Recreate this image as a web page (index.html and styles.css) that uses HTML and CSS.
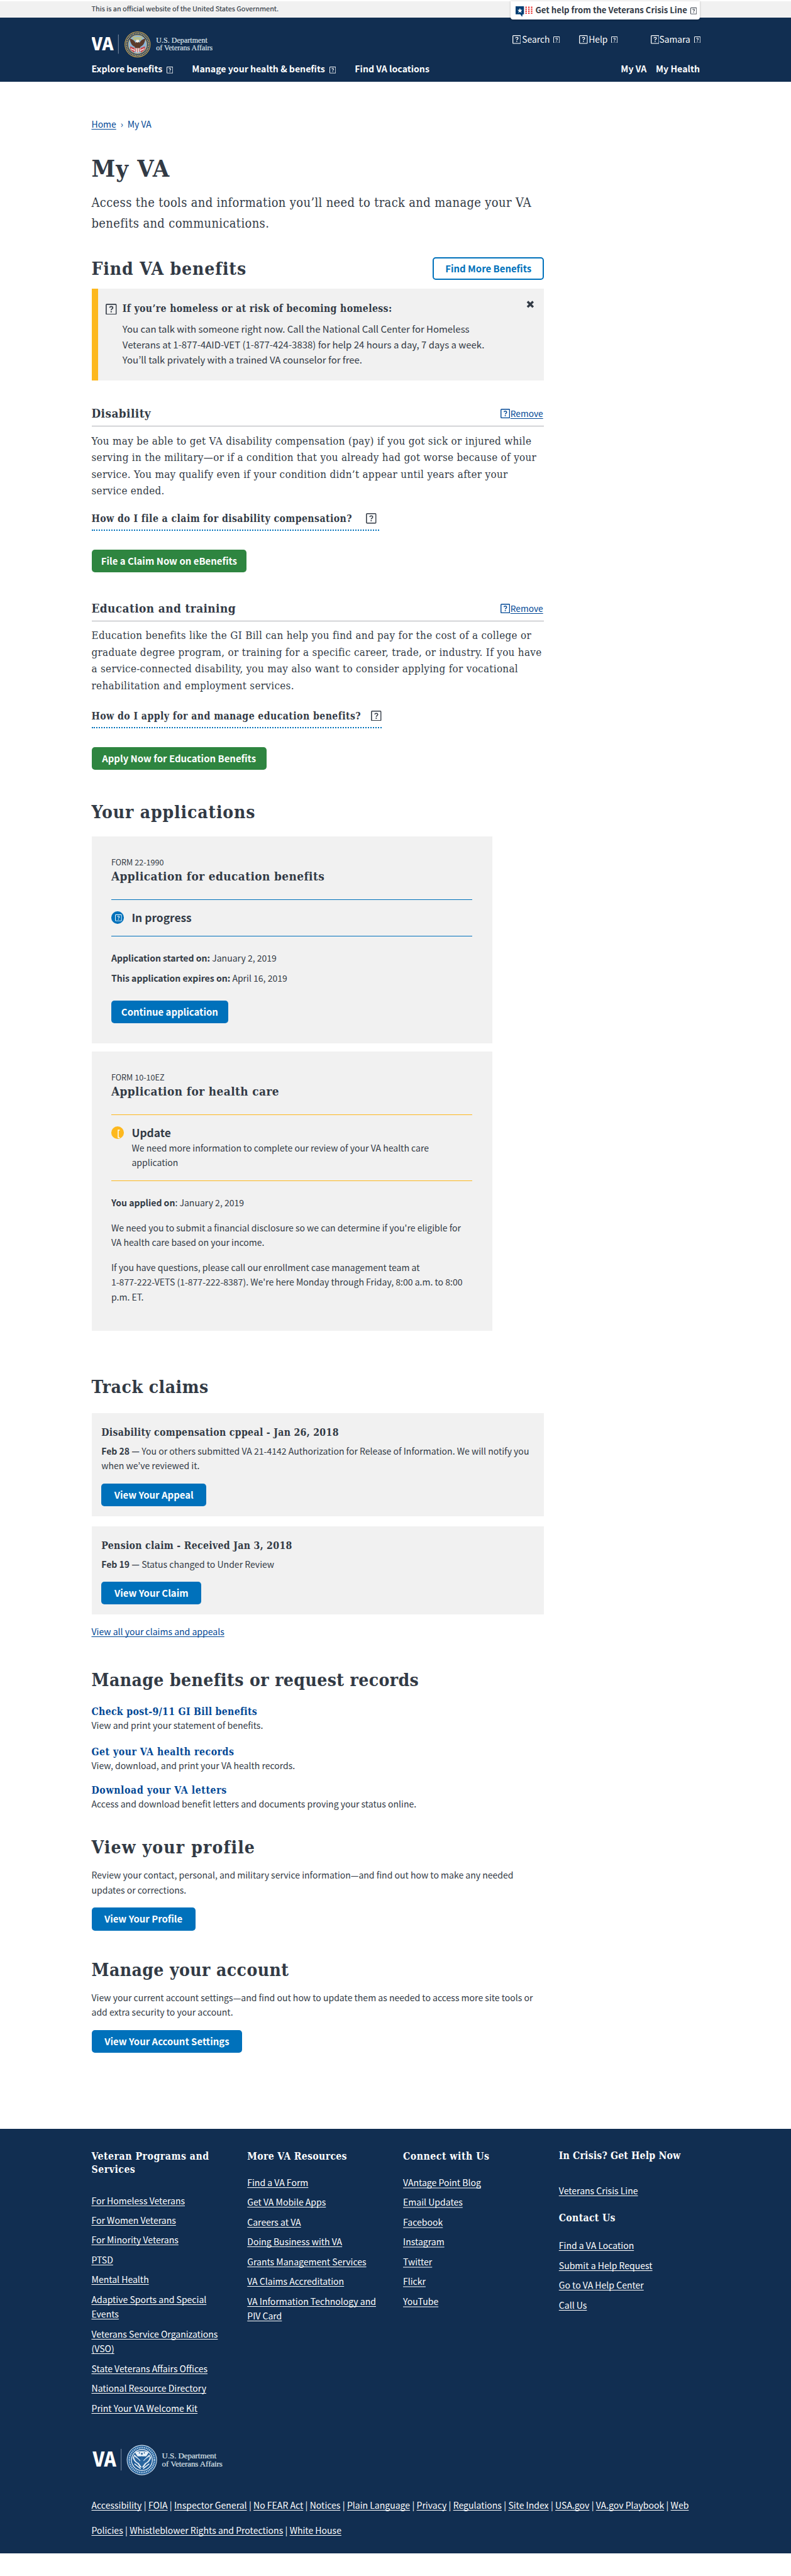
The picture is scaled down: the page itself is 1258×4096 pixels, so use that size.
FILE: index.html
```
<!DOCTYPE html>
<html lang="en">
<head>
<meta charset="utf-8">
<title>My VA</title>
<link rel="stylesheet" href="styles.css">
</head>
<body>
<svg class="defs" aria-hidden="true">
  <symbol id="box" viewBox="0 0 16 16" preserveAspectRatio="none">
    <rect x="0.8" y="0.8" width="14.4" height="14.4" rx="1" fill="none" stroke="currentColor" stroke-width="1.5"/>
    <path d="M5.700 5.600C6.200 4.300 7 4 8 4c1.400 0 2.300.8 2.300 1.900C10.300 7.400 8 7.500 8 9.300" fill="none" stroke="currentColor" stroke-width="1.500"/>
    <rect x="7.100" y="10.600" width="1.800" height="1.700" fill="currentColor"/>
  </symbol>
</svg>

<div class="gov-bar">
  <div class="wrap gov-row">
    <p class="gov-text">This is an official website of the United States Government.</p>
    <a class="crisis">
      <svg class="crisis-logo" viewBox="0 0 28 18">
        <path d="M0 0h13.500v13h-2L10.500 17 7.500 13H0z" fill="#003e73"/>
        <path d="M7 2.800l1.100 2.800 3 .2-2.300 1.900.8 2.900L7 9l-2.600 1.600.8-2.900L2.900 5.800l3-.2z" fill="#fff"/>
        <g stroke="#e8302f" stroke-width="2.200" stroke-dasharray="2.200 1"><path d="M17 0.500v12"/><path d="M21.500 0.500v12"/><path d="M26 0.500v12"/></g>
      </svg>
      <span>Get help from the Veterans Crisis Line</span>
      <svg class="i10"><use href="#box"/></svg>
    </a>
  </div>
</div>

<header class="header">
  <div class="wrap">
    <div class="head-top">
      <svg class="logo" width="196" height="44" viewBox="0 0 196 44">
        <text class="logo-va" x="-0.500" y="31.500" font-size="28.500" textLength="35.500" lengthAdjust="spacingAndGlyphs">VA</text>
        <path d="M43 6v31" stroke="#8292a8" stroke-width="1"/>
        <circle cx="74" cy="22" r="21" fill="#c9a24a"/>
        <circle cx="74" cy="22" r="19.800" fill="#1f3f6e"/>
        <circle cx="74" cy="22" r="17.700" fill="none" stroke="#cfae5c" stroke-width="2.200" stroke-dasharray="1.600 1.100"/>
        <circle cx="74" cy="22" r="15.300" fill="#d9b860"/>
        <circle cx="74" cy="22" r="14.400" fill="#8db4d6"/>
        <path d="M67 10h14v5H67z" fill="#c8c06a" opacity=".7"/>
        <path d="M62 25l10 4-4 6-6-5zM86 25l-10 4 4 6 6-5z" fill="#c94a50"/>
        <path d="M63 29l7 3M85 29l-7 3" stroke="#fff" stroke-width="1.300"/>
        <path d="M61.500 12.500c4 1 8 3.500 9.500 7.500l1-4h4l1 4c1.500-4 5.500-6.500 9.500-7.500-.5 6-2.500 11-7.500 13l-3 6-2 1-2-1-3-6c-5-2-7-7-7.500-13z" fill="#5c3a2a"/>
        <path d="M72 14.500h4l1 3-3 1.500-3-1z" fill="#f4efe4"/>
        <path d="M69 28h10l-2 6-3 1.500L71 34z" fill="#e9e4e0"/>
        <path d="M71 28v6M74 28v7M77 28v6" stroke="#b8454b" stroke-width="1"/>
        <text class="logo-dept" x="104" y="19" font-size="12.200" textLength="83">U.S. Department</text>
        <text class="logo-dept" x="104" y="31.300" font-size="12.200" textLength="91.500">of Veterans Affairs</text>
      </svg>
      <div class="util">
        <a class="u-search"><svg class="i14"><use href="#box"/></svg><span>Search</span><svg class="i10"><use href="#box"/></svg></a>
        <a class="u-help"><svg class="i14"><use href="#box"/></svg><span>Help</span><svg class="i10"><use href="#box"/></svg></a>
        <a class="u-user"><svg class="i14"><use href="#box"/></svg><span>Samara</span><svg class="i10"><use href="#box"/></svg></a>
      </div>
    </div>
    <nav class="nav">
      <a>Explore benefits <svg class="i10"><use href="#box"/></svg></a>
      <a class="n2">Manage your health &amp; benefits <svg class="i10"><use href="#box"/></svg></a>
      <a class="n3">Find VA locations</a>
      <a class="n4">My VA</a>
      <a class="n5">My Health</a>
    </nav>
  </div>
</header>

<main class="wrap">
  <div class="crumbs"><a class="link">Home</a><span class="sep">›</span><span>My VA</span></div>
  <h1 class="h1">My VA</h1>
  <p class="intro">Access the tools and information you’ll need to track and manage your VA<br>benefits and communications.</p>

  <div class="content">
    <section>
      <div class="find-head">
        <h2 class="h2 track-4">Find VA benefits</h2>
        <a class="btn outline">Find More Benefits</a>
      </div>
      <div class="alert">
        <svg class="i18"><use href="#box"/></svg>
        <div class="alert-body">
          <h3 class="h4">If you’re homeless or at risk of becoming homeless:</h3>
          <p>You can talk with someone right now. Call the National Call Center for Homeless<br>Veterans at 1-877-4AID-VET (1-877-424-3838) for help 24 hours a day, 7 days a week.<br>You’ll talk privately with a trained VA counselor for free.</p>
        </div>
        <svg class="close" viewBox="0 0 13 12"><path d="M2 1.500l9 9M11 1.500l-9 9" stroke="#323a45" stroke-width="3.600"/></svg>
      </div>
    </section>

    <section class="benefit">
      <div class="benefit-head">
        <h3 class="h3">Disability</h3>
        <a class="remove"><svg class="i15"><use href="#box"/></svg><span class="link">Remove</span></a>
      </div>
      <p class="serif">You may be able to get VA disability compensation (pay) if you got sick or injured while<br>serving in the military—or if a condition that you already had got worse because of your<br>service. You may qualify even if your condition didn’t appear until years after your<br>service ended.</p>
      <div class="question q1"><span class="h4 track-1">How do I file a claim for disability compensation?</span><svg class="i17"><use href="#box"/></svg></div>
      <a class="btn green b-claim">File a Claim Now on eBenefits</a>
    </section>

    <section class="benefit second">
      <div class="benefit-head">
        <h3 class="h3">Education and training</h3>
        <a class="remove"><svg class="i15"><use href="#box"/></svg><span class="link">Remove</span></a>
      </div>
      <p class="serif">Education benefits like the GI Bill can help you find and pay for the cost of a college or<br>graduate degree program, or training for a specific career, trade, or industry. If you have<br>a service-connected disability, you may also want to consider applying for vocational<br>rehabilitation and employment services.</p>
      <div class="question q2"><span class="h4 track-1">How do I apply for and manage education benefits?</span><svg class="i17"><use href="#box"/></svg></div>
      <a class="btn green b-edu">Apply Now for Education Benefits</a>
    </section>

    <section class="apps">
      <h2 class="h2 track-4">Your applications</h2>
      <article class="app edu">
        <p class="form-no">FORM 22-1990</p>
        <h3 class="h3">Application for education benefits</h3>
        <div class="status blue">
          <span class="dot"><svg class="dot-i"><use href="#box"/></svg></span>
          <div><p class="status-name">In progress</p></div>
        </div>
        <p class="meta"><b>Application started on:</b> January 2, 2019</p>
        <p class="meta2"><b>This application expires on:</b> April 16, 2019</p>
        <a class="btn b-cont">Continue application</a>
      </article>
      <article class="app health">
        <p class="form-no">FORM 10-10EZ</p>
        <h3 class="h3">Application for health care</h3>
        <div class="status gold">
          <span class="dot"><svg class="dot-b" viewBox="0 0 4 14"><path d="M3.500 1H1v12h2.500" fill="none" stroke="#fff" stroke-width="1.500"/></svg></span>
          <div><p class="status-name">Update</p><p class="status-text">We need more information to complete our review of your VA health care<br>application</p></div>
        </div>
        <p class="meta"><b>You applied on</b>: January 2, 2019</p>
        <p class="para">We need you to submit a financial disclosure so we can determine if you're eligible for<br>VA health care based on your income.</p>
        <p class="para">If you have questions, please call our enrollment case management team at<br>1-877-222-VETS (1-877-222-8387). We're here Monday through Friday, 8:00 a.m. to 8:00<br>p.m. ET.</p>
      </article>
    </section>

    <section class="claims">
      <h2 class="h2 track-2">Track claims</h2>
      <article class="claim">
        <h3 class="h4 track-0">Disability compensation cppeal - Jan 26, 2018</h3>
        <p><b>Feb 28 —</b> You or others submitted VA 21-4142 Authorization for Release of Information. We will notify you<br>when we’ve reviewed it.</p>
        <a class="btn b-appeal">View Your Appeal</a>
      </article>
      <article class="claim">
        <h3 class="h4 track-0">Pension claim - Received Jan 3, 2018</h3>
        <p><b>Feb 19 —</b> Status changed to Under Review</p>
        <a class="btn b-vclaim">View Your Claim</a>
      </article>
      <p class="all-claims"><a class="link">View all your claims and appeals</a></p>
    </section>

    <section class="records">
      <h2 class="h2">Manage benefits or request records</h2>
      <div class="rec r1"><a class="h4 track-0">Check post-9/11 GI Bill benefits</a><p>View and print your statement of benefits.</p></div>
      <div class="rec r2"><a class="h4 track-2">Get your VA health records</a><p>View, download, and print your VA health records.</p></div>
      <div class="rec r3"><a class="h4 track-3">Download your VA letters</a><p>Access and download benefit letters and documents proving your status online.</p></div>
    </section>

    <section class="profile">
      <h2 class="h2 track-5">View your profile</h2>
      <p>Review your contact, personal, and military service information—and find out how to make any needed<br>updates or corrections.</p>
      <a class="btn b-profile">View Your Profile</a>
    </section>

    <section class="profile account">
      <h2 class="h2">Manage your account</h2>
      <p>View your current account settings—and find out how to update them as needed to access more site tools or<br>add extra security to your account.</p>
      <a class="btn b-account">View Your Account Settings</a>
    </section>
  </div>
</main>

<footer class="footer">
  <div class="wrap">
    <div class="cols">
      <div class="col c1">
        <h4 class="fh track-2">Veteran Programs and<br>Services</h4>
        <ul>
          <li><a>For Homeless Veterans</a></li><li><a>For Women Veterans</a></li><li><a>For Minority Veterans</a></li><li><a>PTSD</a></li><li><a>Mental Health</a></li>
          <li><a>Adaptive Sports and Special<br>Events</a></li><li><a>Veterans Service Organizations<br>(VSO)</a></li><li><a>State Veterans Affairs Offices</a></li><li><a>National Resource Directory</a></li><li><a>Print Your VA Welcome Kit</a></li>
        </ul>
      </div>
      <div class="col">
        <h4 class="fh">More VA Resources</h4>
        <ul>
          <li><a>Find a VA Form</a></li><li><a>Get VA Mobile Apps</a></li><li><a>Careers at VA</a></li><li><a>Doing Business with VA</a></li><li><a>Grants Management Services</a></li><li><a>VA Claims Accreditation</a></li><li><a>VA Information Technology and<br>PIV Card</a></li>
        </ul>
      </div>
      <div class="col social">
        <h4 class="fh track-2">Connect with Us</h4>
        <ul>
          <li><a>VAntage Point Blog</a></li><li><a>Email Updates</a></li><li><a>Facebook</a></li><li><a>Instagram</a></li><li><a>Twitter</a></li><li><a>Flickr</a></li><li><a>YouTube</a></li>
        </ul>
      </div>
      <div class="col c4">
        <h4 class="fh track-x">In Crisis? Get Help Now</h4>
        <ul class="crisis-list"><li><a>Veterans Crisis Line</a></li></ul>
        <h4 class="fh">Contact Us</h4>
        <ul class="contact-list"><li><a>Find a VA Location</a></li><li><a>Submit a Help Request</a></li><li><a>Go to VA Help Center</a></li><li><a>Call Us</a></li></ul>
      </div>
    </div>
    <svg class="foot-logo" width="214" height="52" viewBox="0 0 214 52">
      <text class="logo-va" x="1.500" y="37" font-size="32" textLength="38" lengthAdjust="spacingAndGlyphs">VA</text>
      <path d="M47.500 8v35" stroke="#8292a8" stroke-width="1"/>
      <circle cx="81" cy="26" r="24.500" fill="#c9dcec"/>
      <circle cx="81" cy="26" r="23.300" fill="#1f5c97"/>
      <circle cx="81" cy="26" r="20.300" fill="none" stroke="#b8d2e8" stroke-width="2.600" stroke-dasharray="1.600 1.300"/>
      <circle cx="81" cy="26" r="17.500" fill="#fff"/>
      <circle cx="81" cy="26" r="16.300" fill="#1f5c97"/>
      <path d="M70 14c3-3 19-3 22 0l-4 6H74z" fill="#e6f0f8"/>
      <path d="M66 22l3-5 12 12 12-12 3 5c-1 4-4 8-8 10l-4 6h-6l-4-6c-4-2-7-6-8-10z" fill="#dbe8f3"/>
      <path d="M68 20c3 1 8 5 10 8l3-9 3 9c2-3 7-7 10-8-1 6-4 9-8 11l-5 7-5-7c-4-2-7-5-8-11z" fill="#2a659e"/>
      <path d="M69 32l10 8M93 32l-10 8" stroke="#fff" stroke-width="1.500"/>
      <circle cx="81" cy="16" r="1.500" fill="#1f5c97"/><circle cx="77" cy="14.500" r="1" fill="#1f5c97"/><circle cx="85" cy="14.500" r="1" fill="#1f5c97"/>
      <text class="logo-dept" x="113.500" y="23" font-size="13.200" textLength="88">U.S. Department</text>
      <text class="logo-dept" x="113.500" y="37" font-size="13.200" textLength="98">of Veterans Affairs</text>
    </svg>
    <p class="legal"><a>Accessibility</a><i>|</i><a>FOIA</a><i>|</i><a>Inspector General</a><i>|</i><a>No FEAR Act</a><i>|</i><a>Notices</a><i>|</i><a>Plain Language</a><i>|</i><a>Privacy</a><i>|</i><a>Regulations</a><i>|</i><a>Site Index</a><i>|</i><a>USA.gov</a><i>|</i><a>VA.gov Playbook</a><i>|</i><a>Web<br>Policies</a><i>|</i><a>Whistleblower Rights and Protections</a><i>|</i><a>White House</a></p>
  </div>
</footer>
</body>
</html>
```

FILE: styles.css
```
html { zoom: 0.9832; }
* { box-sizing: border-box; }
body {
  margin: 0;
  padding-top: 2px;
  background: #fff;
  color: #323a45;
  font: 14.29px/24px "Noto Sans CJK KR", "Noto Sans CJK JP", sans-serif;
  white-space: nowrap;
  overflow-x: hidden;
}
h1, h2, h3, h4, p, ul { margin: 0; padding: 0; font-weight: inherit; }
ul { list-style: none; }
svg { flex: none; display: block; }
.defs { position: absolute; width: 0; height: 0; }
.wrap { width: 984px; margin-left: 148px; }
.i10 { width: 10.5px; height: 11px; }
.i14 { width: 14px; height: 14px; }
.i15 { width: 15.5px; height: 15.5px; }
.i17 { width: 17px; height: 17px; }
.i18 { width: 18px; height: 18px; }

/* government banner */
.gov-bar { height: 26px; background: #f1f1f1; }
.gov-row { display: flex; justify-content: space-between; }
.gov-text { font-size: 11.12px; line-height: 24px; -webkit-text-stroke: 0.15px; }
.crisis {
  position: relative;
  display: flex;
  width: 306px;
  height: 30px;
  padding-left: 8px;
  background: #fff;
  border-radius: 0 0 4px 4px;
  box-shadow: 0 1px 3px rgba(0, 0, 0, .25);
  font: 700 13.4px/28px "Noto Sans CJK KR", sans-serif;
}
.crisis-logo { width: 28px; height: 18px; margin: 8px 4px 0 0; }
.crisis .i10 { margin: 10.5px 0 0 5px; }

/* header */
.header { height: 104px; background: #112e51; color: #fff; }
.head-top { display: flex; justify-content: space-between; height: 72px; }
.logo { margin-top: 22px; }
.logo-va { font-family: "Noto Sans CJK KR", sans-serif; font-weight: 900; fill: #fff; }
.logo-dept { font-family: "Liberation Serif", serif; fill: #dfe5ec; stroke: #dfe5ec; stroke-width: 0.2px; }
.util { display: flex; margin: 24px -1px 0 0; font-size: 14.05px; }
.util a { display: flex; }
.util .i14 { margin-top: 5px; }
.util .i10 { margin: 6.5px 0 0 6px; }
.u-search span { margin-left: 2px; }
.u-help { margin-left: 31.5px; }
.u-help span { margin-left: 1px; }
.u-user { margin-left: 53px; }
.nav { display: flex; font-weight: 700; font-size: 14.4px; }
.nav a { display: flex; }
.nav .i10 { margin: 8px 0 0 7px; }
.n2 { margin-left: 30.5px; }
.n3 { margin-left: 31px; }
.n4 { margin-left: auto; }
.n5 { margin-left: 15px; }

/* type */
.h1, .h2, .h3, .h4, .fh { font-family: "DejaVu Serif Condensed", "DejaVu Serif", serif; font-stretch: condensed; font-weight: 700; }
.h1 { font-size: 38.5px; line-height: 48px; margin-top: 35px; letter-spacing: 1.14px; }
.h2 { font-size: 28.6px; line-height: 39px; letter-spacing: .4px; }
.h3 { font-size: 19.2px; line-height: 26px; letter-spacing: .41px; }
.h4 { font-size: 16px; line-height: 24px; letter-spacing: .36px; }
.fh { font-size: 16px; line-height: 22px; letter-spacing: .3px; }
.track-x { letter-spacing: .16px; }
.track-0 { letter-spacing: .31px; }
.track-1 { letter-spacing: .415px; }
.track-2 { letter-spacing: .51px; }
.track-3 { letter-spacing: .62px; }
.track-4 { letter-spacing: .86px; }
.track-5 { letter-spacing: 1.14px; }
.serif, .intro { font-family: "DejaVu Serif Condensed", "DejaVu Serif", serif; font-stretch: condensed; }
.serif { font-size: 17.2px; line-height: 27px; letter-spacing: .31px; margin-top: 9.5px; }
.intro { font-size: 20.3px; line-height: 34px; letter-spacing: .36px; margin-top: 15px; }
.link { color: #004795; text-decoration: underline; text-decoration-thickness: 1px; text-underline-offset: 2px; text-decoration-skip-ink: none; }
.crumbs { display: flex; padding-top: 57px; height: 81px; color: #004795; font-size: 14.2px; }
.crumbs .sep { margin: 0 7px; }

/* buttons */
.btn {
  display: block;
  height: 37px;
  border-radius: 5px;
  background: #0071bb;
  color: #fff;
  font-size: 15.2px;
  font-weight: 700;
  line-height: 37px;
  text-align: center;
}
.btn.green { background: #2e8540; }
.btn.outline { width: 180px; border: 2.05px solid #0071bb; background: #fff; color: #0071bb; line-height: 33px; }
.b-claim { width: 251px; margin-top: 30px; }
.b-edu { width: 283px; margin-top: 30.2px; }
.b-cont { width: 189px; margin-top: 24px; }
.b-appeal { width: 170px; margin-top: 16px; }
.b-vclaim { width: 162px; margin-top: 16px; }
.b-profile { width: 168px; margin-top: 16.4px; }
.b-account { width: 244px; margin-top: 16.4px; }

/* benefits */
.content { width: 732px; }
.find-head { display: flex; justify-content: space-between; height: 39px; margin-top: 37px; }
.alert { display: flex; height: 148px; margin-top: 12px; padding: 20px 16px 0 13px; border-left: 10.2px solid #fdb81e; background: #f1f1f1; }
.alert .i18 { margin-top: 4px; }
.alert-body { flex: 1; margin-left: 9px; }
.alert-body p { margin-top: 9px; font-size: 15.21px; line-height: 25px; }
.close { width: 13px; height: 12px; margin-top: -1px; }
.benefit { padding-top: 41px; }
.benefit.second { padding-top: 45px; }
.benefit-head { display: flex; justify-content: space-between; height: 34px; border-bottom: 1.02px solid #aeb0b5; }
.remove { display: flex; margin: 1px 1.5px 0 0; color: #004795; font-size: 14.03px; }
.remove .i15 { margin: 4.5px 0.5px 0 0; }
.question { display: flex; justify-content: space-between; height: 32.5px; padding-right: 4px; border-bottom: 2.05px dotted #0071bb; }
.question .h4 { line-height: 26px; }
.question .i17 { margin-top: 3.5px; }
.q1 { width: 465px; margin-top: 19px; }
.q2 { width: 469px; margin-top: 23px; padding-right: 0; }

/* applications */
.apps { padding-top: 50px; }
.app { width: 648px; margin-top: 19px; padding: 31.5px 32px 0; background: #f1f1f1; }
.app.edu { height: 334px; }
.app.health { height: 451px; margin-top: 14px; }
.form-no { font-size: 12.82px; line-height: 20px; }
.status { display: flex; margin-top: 23.5px; padding-top: 16.3px; border-top: 1.02px solid; border-bottom: 1.02px solid; }
.status > div { color: #323a45; }
.status.blue { height: 60px; border-color: #0071bb; }
.status.gold { height: 108px; border-color: #fdb81e; }
.status-name { font-size: 17.69px; font-weight: 700; }
.status-text { margin-top: 1.3px; }
.dot { display: flex; width: 20px; height: 20px; margin: 2.7px 13px 0 0; border-radius: 50%; background: #0071bb; color: #fff; }
.gold .dot { background: #fdb81e; }
.dot-i { width: 11px; height: 11px; margin: 5px 0 0 6px; }
.dot-b { width: 4px; height: 14px; margin: 5px 0 0 10px; }
.meta { margin-top: 24px; }
.meta2 { margin-top: 8px; }
.para { margin-top: 16px; }

/* claims */
.claims { padding-top: 72.4px; }
.claim { margin-top: 16px; padding: 20px 16px 16px; background: #f1f1f1; }
.claims .h2 + .claim { margin-top: 21.7px; }
.claim p { margin-top: 6px; }
.all-claims { margin-top: 16px; }

/* records and account */
.records { padding-top: 47.5px; }
.rec .h4 { display: block; line-height: 20px; color: #004795; }
.r1 { margin-top: 21px; }
.r2 { margin-top: 21px; }
.r3 { margin-top: 18.2px; }
.profile { padding-top: 39.3px; }
.profile p { margin-top: 13px; }
.profile.account { padding-top: 44.6px; }

/* footer */
.footer { height: 686px; margin: 123px 0 37px; padding-top: 33px; background: #112e51; color: #fff; }
.footer a { text-decoration: underline; text-decoration-thickness: 1px; text-underline-offset: 2px; text-decoration-skip-ink: none; }
.cols { display: grid; grid-template-columns: repeat(4, 252px); height: 431px; }
.col ul { display: flex; flex-direction: column; gap: 8px; margin-top: 20px; }
.col.c1 ul { margin-top: 27px; }
.footer .social a { text-decoration-color: #8896a9; text-decoration-thickness: 2px; }
.c4 { margin-top: -1px; }
.col .crisis-list { margin: 34px 0 21px; }
.col .contact-list { margin-top: 22px; }
.foot-logo { margin-top: 45px; }
.legal { margin-top: 28px; line-height: 40px; }
.legal i { margin: 0 3.4px; font-style: normal; }
```
